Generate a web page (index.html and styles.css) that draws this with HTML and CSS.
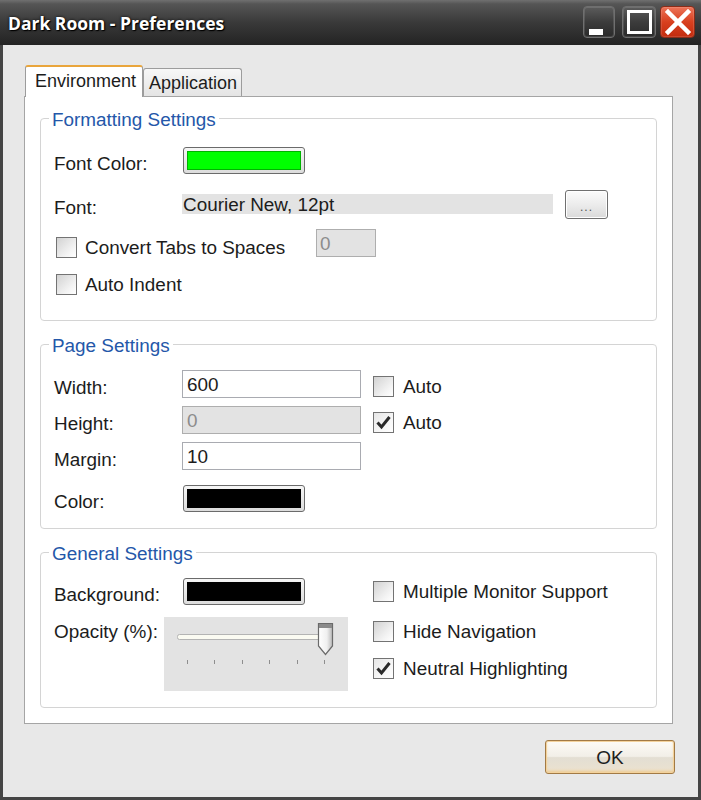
FILE: index.html
```html
<!DOCTYPE html>
<html>
<head>
<meta charset="utf-8">
<title>Dark Room - Preferences</title>
<link rel="stylesheet" href="styles.css">
</head>
<body>
<div class="window">
  <div class="titlebar">
    <div class="title">Dark Room - Preferences</div>
    <div class="controls">
      <div class="tb-btn tb-min"><svg width="32" height="32" viewBox="0 0 32 32"><rect x="6" y="23" width="14" height="6" fill="#fff"/></svg></div>
      <div class="tb-btn tb-max"><svg width="34" height="32" viewBox="0 0 34 32"><rect x="6.5" y="5.5" width="22" height="21" fill="none" stroke="#fff" stroke-width="3"/></svg></div>
      <div class="tb-btn tb-close"><svg width="35" height="32" viewBox="0 0 35 32"><path d="M8 6 L28 26 M28 6 L8 26" stroke="#fff" stroke-width="4.5" stroke-linecap="square"/></svg></div>
    </div>
  </div>
  <div class="client">
    <div class="tabs">
      <div class="tab active">Environment</div>
      <div class="tab">Application</div>
    </div>
    <div class="panel">
      <div class="group g-format">
        <div class="group-title">Formatting Settings</div>
        <div class="row">
          <span class="label">Font Color:</span>
          <span class="swatch sw-green"><i></i></span>
        </div>
        <div class="row gap16">
          <span class="label">Font:</span>
          <span class="fontfield">Courier New, 12pt</span>
          <span class="dots-btn">...</span>
        </div>
        <div class="row gap11">
          <span class="check check-wide"><span class="box"></span><span>Convert Tabs to Spaces</span></span>
          <span class="input input-small disabled">0</span>
        </div>
        <div class="row gap13">
          <span class="check"><span class="box"></span><span>Auto Indent</span></span>
        </div>
      </div>

      <div class="group g-page">
        <div class="group-title">Page Settings</div>
        <div class="row">
          <span class="label">Width:</span>
          <span class="input input-wide">600</span>
          <span class="check check-right"><span class="box"></span><span>Auto</span></span>
        </div>
        <div class="row gap8">
          <span class="label">Height:</span>
          <span class="input input-wide disabled">0</span>
          <span class="check check-right"><span class="box checked"><svg width="19" height="19" viewBox="0 0 19 19"><path d="M3.5 9.5 L7.5 14 L15.5 4" fill="none" stroke="#2b2b2b" stroke-width="3"/></svg></span><span>Auto</span></span>
        </div>
        <div class="row gap8">
          <span class="label">Margin:</span>
          <span class="input input-wide">10</span>
        </div>
        <div class="row gap14">
          <span class="label">Color:</span>
          <span class="swatch sw-black"><i></i></span>
        </div>
      </div>

      <div class="group g-general">
        <div class="group-title">General Settings</div>
        <div class="gen-left">
          <div class="row row26">
            <span class="label">Background:</span>
            <span class="swatch sw-black"><i></i></span>
          </div>
          <div class="slider-row">
            <span class="label label-opacity">Opacity (%):</span>
            <svg class="slider" width="184" height="74" viewBox="0 0 184 74">
              <defs>
                <linearGradient id="thumb" x1="0" y1="0" x2="1" y2="0">
                  <stop offset="0" stop-color="#ffffff"/>
                  <stop offset="0.6" stop-color="#f0f0f0"/>
                  <stop offset="1" stop-color="#b8b8b8"/>
                </linearGradient>
              </defs>
              <rect x="0" y="0" width="184" height="74" fill="#e3e3e3"/>
              <rect x="13.5" y="17.5" width="148" height="5" rx="2" fill="#fbfbf2" stroke="#b4b4b4" stroke-width="1"/>
              <path d="M154.5 6.5 L168.5 6.5 L168.5 29 L161.5 37.5 L154.5 29 Z" fill="url(#thumb)" stroke="#6a6a6a" stroke-width="1.2"/>
              <rect x="155" y="7" width="13" height="4" fill="#8a8a8a"/>
              <g stroke="#8e8e8e" stroke-width="1">
                <line x1="23.5" y1="43" x2="23.5" y2="47"/>
                <line x1="50.5" y1="43" x2="50.5" y2="47"/>
                <line x1="78.5" y1="43" x2="78.5" y2="47"/>
                <line x1="105.5" y1="43" x2="105.5" y2="47"/>
                <line x1="133.5" y1="43" x2="133.5" y2="47"/>
                <line x1="160.5" y1="43" x2="160.5" y2="47"/>
              </g>
            </svg>
          </div>
        </div>
        <div class="gen-right">
          <div class="row row26">
            <span class="check"><span class="box"></span><span>Multiple Monitor Support</span></span>
          </div>
          <div class="row row26 gap14">
            <span class="check"><span class="box"></span><span>Hide Navigation</span></span>
          </div>
          <div class="row row26 gap11">
            <span class="check"><span class="box checked"><svg width="19" height="19" viewBox="0 0 19 19"><path d="M3.5 9.5 L7.5 14 L15.5 4" fill="none" stroke="#2b2b2b" stroke-width="3"/></svg></span><span>Neutral Highlighting</span></span>
          </div>
        </div>
      </div>
    </div>
    <div class="footer">
      <span class="ok-btn">OK</span>
    </div>
  </div>
</div>
</body>
</html>
```

FILE: styles.css
```css
html, body {
  margin: 0;
  padding: 0;
  background: #ffffff;
}

body {
  font-family: "Liberation Sans", Arial, sans-serif;
  font-size: 18.9px;
  color: #1c1c1c;
}

.window {
  width: 701px;
  height: 800px;
  display: flex;
  flex-direction: column;
  background: #e8e8e8;
}

/* Title bar */
.titlebar {
  height: 45px;
  flex: none;
  display: flex;
  justify-content: space-between;
  align-items: flex-start;
  background: linear-gradient(#707070 0px, #555555 4px, #3a3a3a 22px, #232323 45px);
}

.title {
  font-family: "Open Sans", "DejaVu Sans", sans-serif;
  font-weight: 700;
  font-size: 17.5px;
  color: #ffffff;
  padding-left: 8px;
  line-height: 47px;
  text-shadow: 0 0 3px rgba(0,0,0,0.9), 1px 1px 1px #000;
}

.controls {
  display: flex;
  padding-top: 6px;
  padding-right: 6px;
}

.tb-btn {
  height: 32px;
  box-sizing: border-box;
  border: 1px solid #6f6f6f;
  border-radius: 4px;
  background: linear-gradient(#5c5c5c, #3c3c3c 50%, #2a2a2a);
  box-shadow: inset 0 0 0 1px rgba(255,255,255,0.12);
  overflow: hidden;
  display: flex;
}

.tb-btn svg {
  margin: -1px;
}

.tb-min { width: 32px; }
.tb-max { width: 34px; margin-left: 7px; }
.tb-close {
  width: 35px;
  margin-left: 4px;
  border-color: #8c2c18;
  background: linear-gradient(#ec7358, #d8401f 50%, #c32c0f);
}

/* Client area */
.client {
  flex: 1;
  display: flex;
  flex-direction: column;
  border: 3px solid #444444;
  border-top: none;
  padding: 20px 25px 0 21px;
}

.tabs {
  display: flex;
  align-items: flex-end;
  height: 31px;
  position: relative;
  z-index: 2;
}

.tab {
  box-sizing: border-box;
  height: 28px;
  width: 99px;
  padding-left: 5px;
  border: 1px solid #9c9c9c;
  border-bottom: none;
  border-radius: 3px 3px 0 0;
  background: linear-gradient(#f7f7f7, #e4e4e4);
  font-size: 18px;
  line-height: 28px;
  color: #1c1c1c;
}

.tab.active {
  height: 32px;
  width: 118px;
  margin-left: 1px;
  margin-bottom: -1px;
  padding-left: 9px;
  background: #ffffff;
  border-color: #9c9c9c;
  border-top: 2px solid #e9a53c;
  line-height: 29px;
}

.panel {
  height: 628px;
  box-sizing: border-box;
  border: 1px solid #a5a5a5;
  background: #ffffff;
  padding: 21px 15px 0 15px;
}

/* Group boxes */
.group {
  position: relative;
  border: 1px solid #d4d4d4;
  border-radius: 4px;
  background: #ffffff;
}

.group + .group {
  margin-top: 23px;
}

.group-title {
  position: absolute;
  top: -10px;
  left: 8px;
  padding: 0 3px;
  line-height: 21px;
  background: #ffffff;
  color: #2457a9;
}

.g-format { padding: 27px 0 22px 13px; }
.g-page { padding: 25px 0 16px 13px; }
.g-general { padding: 25px 0 16px 13px; display: flex; }

.row {
  display: flex;
  align-items: center;
  height: 28px;
}

.row26 { height: 26px; }

.gap8 { margin-top: 8px; }
.gap11 { margin-top: 11px; }
.gap13 { margin-top: 13px; }
.gap14 { margin-top: 14px; }
.gap16 { margin-top: 16px; }

.label {
  width: 128px;
  flex: none;
  padding-top: 8px;
}

/* Colour swatches */
.swatch {
  box-sizing: border-box;
  width: 122px;
  height: 27px;
  margin-left: 1px;
  border: 1px solid #6b6b6b;
  border-radius: 3px;
  padding: 3px;
  background: linear-gradient(#f6f6f6, #dcdcdc);
  display: flex;
}

.swatch i {
  flex: 1;
  border: 1px solid rgba(0,0,0,0.3);
}

.sw-green i { background: #00ff00; }
.sw-black i { background: #000000; }

/* Font field */
.fontfield {
  box-sizing: border-box;
  width: 371px;
  height: 20px;
  padding-left: 1px;
  background: #e3e3e3;
  line-height: 21px;
  white-space: nowrap;
}

.dots-btn {
  box-sizing: border-box;
  width: 43px;
  height: 29px;
  margin-left: 12px;
  border: 1px solid #707070;
  border-radius: 3px;
  background: linear-gradient(#fbfbfb, #ececec 50%, #dadada);
  box-shadow: inset 0 0 0 1px #ffffff;
  color: #555;
  font-size: 12px;
  text-align: center;
  line-height: 32px;
  letter-spacing: 1px;
}

/* Inputs */
.input {
  box-sizing: border-box;
  height: 28px;
  border: 1px solid #a9abb1;
  background: #ffffff;
  padding: 0 4px;
  line-height: 27px;
}

.input-wide { width: 179px; }
.input-small { width: 60px; padding-left: 3px; }

.input.disabled {
  background: #e3e3e3;
  color: #8c8c8c;
  border-color: #aeaeae;
}

/* Checkboxes */
.check {
  display: flex;
  align-items: center;
  gap: 8px;
  white-space: nowrap;
}

.check > span:last-child {
  padding-top: 1px;
}

.check-wide {
  width: 260px;
  margin-left: 2px;
  padding-top: 8px;
  box-sizing: border-box;
}

.g-format .row .check:not(.check-wide) {
  margin-left: 2px;
}

.check-right {
  margin-left: 12px;
  gap: 9px;
  padding-top: 4px;
}

.gen-right .check {
  gap: 9px;
}

.box {
  box-sizing: border-box;
  width: 21px;
  height: 21px;
  flex: none;
  border: 1px solid #737373;
  background: linear-gradient(135deg, #d2d2d2, #f4f4f4 70%, #ffffff);
  display: flex;
  align-items: center;
  justify-content: center;
}

.box.checked {
  background: linear-gradient(135deg, #e6e6e6, #fafafa 70%, #ffffff);
}

/* General group */
.gen-left {
  width: 319px;
  flex: none;
}

.slider-row {
  display: flex;
  align-items: flex-start;
  margin-top: 13px;
}

.label-opacity {
  width: 110px;
  padding-top: 4px;
}

.slider {
  display: block;
  flex: none;
}

/* Footer */
.footer {
  display: flex;
  justify-content: flex-end;
  margin-top: 16px;
  margin-right: -2px;
}

.ok-btn {
  box-sizing: border-box;
  width: 130px;
  height: 34px;
  border: 1px solid #a27a45;
  border-radius: 3px;
  background: linear-gradient(#fdfbf6, #f2efe8 48%, #e3ded3 52%, #ece2cf);
  box-shadow: inset 0 0 0 1px #f3d29c, inset 0 -2px 3px #efc98d;
  text-align: center;
  line-height: 33px;
  font-size: 19px;
  color: #1e1e1e;
}
```
